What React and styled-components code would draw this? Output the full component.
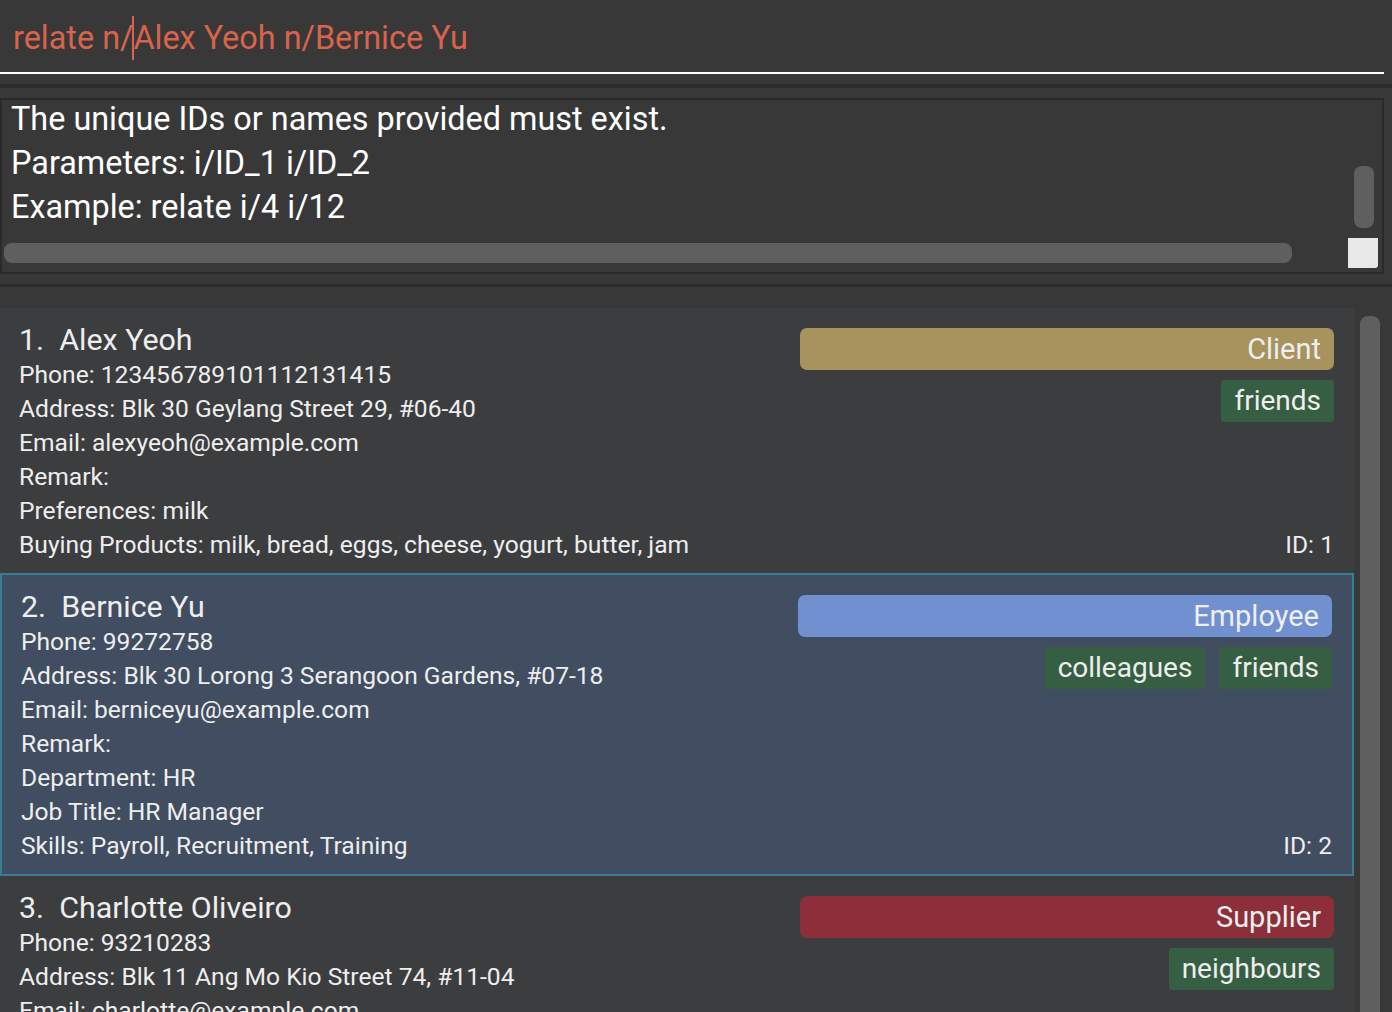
import React from 'react';
import styled, { createGlobalStyle } from 'styled-components';

const GlobalStyle = createGlobalStyle`
  html, body {
    margin: 0;
    padding: 0;
    background: #383838;
  }
  body {
    font-family: Roboto, "Noto Sans", sans-serif;
    color: #eeeeee;
  }
`;

const persons = [
  {
    index: 1,
    name: 'Alex Yeoh',
    role: 'Client',
    tags: ['friends'],
    fields: [
      ['Phone', '123456789101112131415'],
      ['Address', 'Blk 30 Geylang Street 29, #06-40'],
      ['Email', 'alexyeoh@example.com'],
      ['Remark', ''],
      ['Preferences', 'milk'],
      ['Buying Products', 'milk, bread, eggs, cheese, yogurt, butter, jam'],
    ],
  },
  {
    index: 2,
    name: 'Bernice Yu',
    role: 'Employee',
    tags: ['colleagues', 'friends'],
    selected: true,
    fields: [
      ['Phone', '99272758'],
      ['Address', 'Blk 30 Lorong 3 Serangoon Gardens, #07-18'],
      ['Email', 'berniceyu@example.com'],
      ['Remark', ''],
      ['Department', 'HR'],
      ['Job Title', 'HR Manager'],
      ['Skills', 'Payroll, Recruitment, Training'],
    ],
  },
  {
    index: 3,
    name: 'Charlotte Oliveiro',
    role: 'Supplier',
    tags: ['neighbours'],
    fields: [
      ['Phone', '93210283'],
      ['Address', 'Blk 11 Ang Mo Kio Street 74, #11-04'],
      ['Email', 'charlotte@example.com'],
      ['Remark', ''],
      ['Company', 'Fresh Farms'],
      ['Products', 'eggs, milk'],
    ],
  },
];

const roleColor = {
  Client: '#a8935e',
  Employee: '#7190d0',
  Supplier: '#8c2f3a',
};

export default function App() {
  return (
    <>
      <GlobalStyle />
      <Window>
        <CommandBox>
          relate n/<Caret />Alex Yeoh n/Bernice Yu
        </CommandBox>
        <Divider $after={10} />
        <ResultBox>
          <ResultText>
            <div>The unique IDs or names provided must exist.</div>
            <div>Parameters: i/ID_1 i/ID_2</div>
            <div>Example: relate i/4 i/12</div>
          </ResultText>
          <VThumb />
          <HThumb />
          <Corner />
        </ResultBox>
        <Divider $after={21} />
        <ListPanel>
          <Cards>
            {persons.map((p) => (
              <Card key={p.index} $selected={p.selected}>
                <Details>
                  <Name>{p.index}.&nbsp;&nbsp;{p.name}</Name>
                  {p.fields.map(([label, value]) => (
                    <Line key={label}>{label}: {value}</Line>
                  ))}
                </Details>
                <Side>
                  <RoleTag $color={roleColor[p.role]}>{p.role}</RoleTag>
                  <TagRow>
                    {p.tags.map((t) => (
                      <Tag key={t}>{t}</Tag>
                    ))}
                  </TagRow>
                  <IdLine>ID: {p.index}</IdLine>
                </Side>
              </Card>
            ))}
          </Cards>
          <ListScroll>
            <ListThumb />
          </ListScroll>
        </ListPanel>
      </Window>
    </>
  );
}

const Window = styled.div`
  width: 1392px;
  height: 1012px;
  overflow: hidden;
  display: flex;
  flex-direction: column;
  background: #383838;
`;

const CommandBox = styled.div`
  height: 74px;
  margin-right: 8px;
  padding: 4px 0 0 13px;
  box-sizing: border-box;
  display: flex;
  align-items: center;
  white-space: pre;
  font-size: 32.4px;
  color: #d9644b;
  border-bottom: 2px solid #ffffff;
  flex-shrink: 0;
`;

const Caret = styled.span`
  display: inline-block;
  width: 2px;
  height: 44px;
  margin: 0 -1px 0 -1px;
  background: #d9644b;
`;

const Divider = styled.div`
  flex-shrink: 0;
  padding: 10px 0 ${(p) => p.$after}px;
  &::after {
    content: '';
    display: block;
    height: ${(p) => (p.$after > 10 ? 3 : 4)}px;
    background: #2c2c2c;
  }
`;

const ResultBox = styled.div`
  flex-shrink: 0;
  height: 176px;
  margin-right: 8px;
  box-sizing: border-box;
  border: 2px solid #2a2a2a;
  display: grid;
  grid-template-columns: 1fr 30px;
  grid-template-rows: 1fr 30px;
  padding: 0 4px 4px 2px;
  overflow: hidden;
`;

const ResultText = styled.div`
  grid-column: 1;
  grid-row: 1;
  padding-left: 7px;
  margin-top: -3px;
  font-size: 32.4px;
  line-height: 44px;
  color: #ffffff;
  white-space: nowrap;
`;

const VThumb = styled.div`
  grid-column: 2;
  grid-row: 1;
  align-self: end;
  justify-self: end;
  width: 20px;
  height: 62px;
  margin: 0 4px 10px 0;
  border-radius: 8px;
  background: #5f5f5f;
`;

const HThumb = styled.div`
  grid-column: 1;
  grid-row: 2;
  align-self: center;
  height: 20px;
  margin-right: 56px;
  border-radius: 8px;
  background: #5f5f5f;
`;

const Corner = styled.div`
  grid-column: 2;
  grid-row: 2;
  background: #e8e8e8;
  border-radius: 0 0 3px 0;
`;

const ListPanel = styled.div`
  flex: 1;
  display: flex;
  min-height: 0;
`;

const Cards = styled.div`
  width: 1354px;
  flex-shrink: 0;
  display: flex;
  flex-direction: column;
`;

const Card = styled.div`
  display: flex;
  flex-shrink: 0;
  padding: 14px 20px 11px 19px;
  background: ${(p) => (p.$selected ? '#414d60' : '#3c3d3f')};
  border: ${(p) => (p.$selected ? '2px solid #3a7d93' : 'none')};
`;

const Details = styled.div`
  flex: 1;
  min-width: 0;
  white-space: nowrap;
`;

const Name = styled.div`
  font-size: 30.4px;
  line-height: 36px;
`;

const Line = styled.div`
  font-size: 24.6px;
  line-height: 34px;
`;

const Side = styled.div`
  width: 534px;
  flex-shrink: 0;
  display: flex;
  flex-direction: column;
  align-items: flex-end;
  padding-top: 6px;
`;

const RoleTag = styled.div`
  align-self: stretch;
  height: 42px;
  padding-right: 13px;
  border-radius: 7px;
  background: ${(p) => p.$color};
  font-size: 29px;
  line-height: 42px;
  text-align: right;
`;

const TagRow = styled.div`
  display: flex;
  gap: 14px;
  margin-top: 10px;
`;

const Tag = styled.div`
  height: 42px;
  padding: 0 13px;
  border-radius: 3px;
  background: #365e42;
  font-size: 28px;
  line-height: 42px;
`;

const IdLine = styled.div`
  margin-top: auto;
  font-size: 24.6px;
  line-height: 34px;
`;

const ListScroll = styled.div`
  flex: 1;
  padding: 8px 0 0 6px;
`;

const ListThumb = styled.div`
  width: 20px;
  height: 100%;
  border-radius: 8px 8px 0 0;
  background: #5f5f5f;
`;
